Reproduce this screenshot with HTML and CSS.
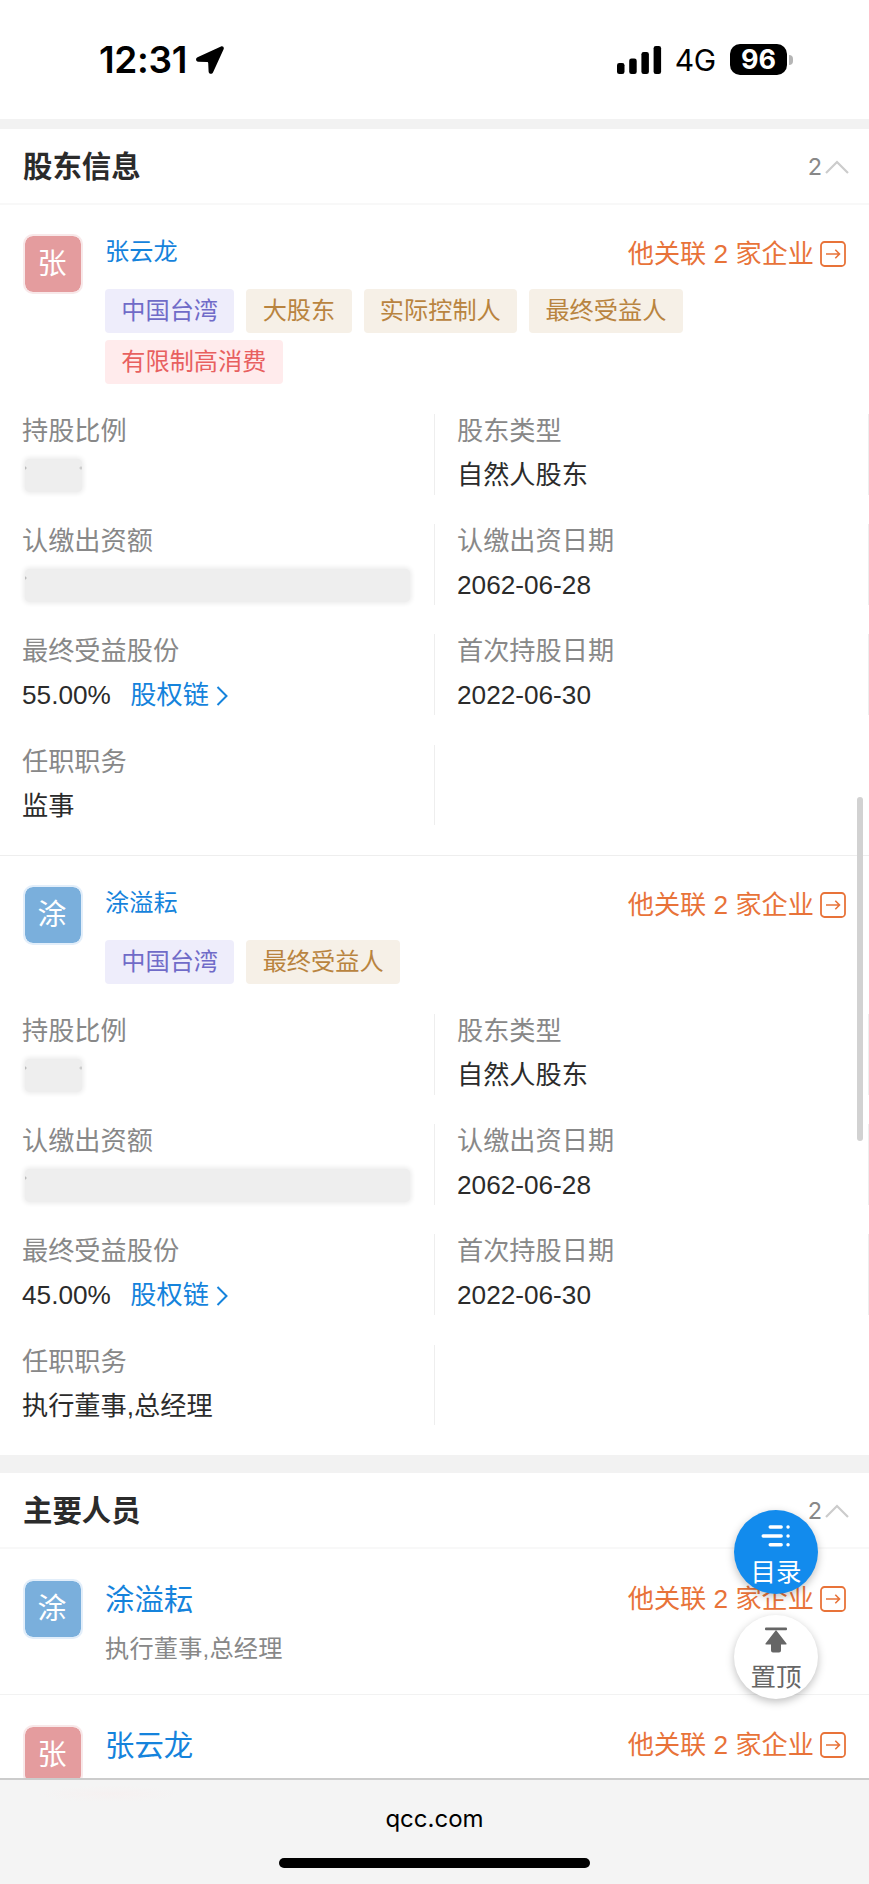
FILE: index.html
```html
<!DOCTYPE html>
<html lang="zh-CN">
<head>
<meta charset="UTF-8" />
<meta name="viewport" content="width=device-width, initial-scale=1" />
<title>股东信息</title>
<link rel="stylesheet" href="styles.css">
</head>
<body>
<svg class="defs" width="0" height="0">
  <symbol id="ic-go" viewBox="0 0 26 26">
    <rect x="1" y="1" width="24" height="24" rx="3.5" fill="none" stroke="currentColor" stroke-width="1.8" />
    <path d="M6 13h13.5M15.300 8.800l4.200 4.200-4.200 4.200" fill="none" stroke="currentColor" stroke-width="1.600" />
  </symbol>
  <symbol id="ic-up" viewBox="0 0 24 14">
    <path d="M1 13L12 2l11 11" fill="none" stroke="currentColor" stroke-width="2.2" />
  </symbol>
  <symbol id="ic-right" viewBox="0 0 12 20">
    <path d="M1.500 1l9 9-9 9" fill="none" stroke="currentColor" stroke-width="2" />
  </symbol>
</svg>

<header class="status">
  <div class="status-left">
    <span class="time">12:31</span>
    <svg class="location" viewBox="0 0 28 28"><path d="M25 .4L1.500 11.300C-.8 12.400-.2 15.600 2.200 15.700l8.800.2c.8 0 1.200.4 1.200 1.200l.4 8.400c.1 2.700 3.500 3.100 4.500.8L27.600 3.200C28.400 1.300 26.900-.4 25 .4z" /></svg>
  </div>
  <div class="status-right">
    <svg class="signal" viewBox="0 0 45 28">
      <rect x="0" y="17" width="7.500" height="11" rx="2.300" />
      <rect x="12.200" y="12.500" width="7.500" height="15.500" rx="2.300" />
      <rect x="24.400" y="6" width="7.500" height="22" rx="2.300" />
      <rect x="36.600" y="0" width="7.500" height="28" rx="2.300" />
    </svg>
    <span class="network">4G</span>
    <span class="battery">96</span>
    <span class="battery-tip"></span>
  </div>
</header>

<main class="content">
  <section class="section">
    <div class="section-head">
      <h2>股东信息</h2>
      <span class="count">2<svg class="ic-up"><use href="#ic-up" /></svg></span>
    </div>

    <article class="holder">
      <div class="person">
        <div class="avatar red">张</div>
        <div class="person-main">
          <div class="person-top">
            <a class="name">张云龙</a>
            <a class="related">他关联 2 家企业<svg class="ic-go"><use href="#ic-go" /></svg></a>
          </div>
          <div class="tags">
            <span class="tag purple">中国台湾</span>
            <span class="tag gold">大股东</span>
            <span class="tag gold">实际控制人</span>
            <span class="tag gold">最终受益人</span>
            <span class="tag pink">有限制高消费</span>
          </div>
        </div>
      </div>
      <div class="info">
        <div class="cell"><label>持股比例</label><div class="mask short"></div></div>
        <div class="cell"><label>股东类型</label><div class="value">自然人股东</div></div>
        <div class="cell"><label>认缴出资额</label><div class="mask"></div></div>
        <div class="cell"><label>认缴出资日期</label><div class="value">2062-06-28</div></div>
        <div class="cell"><label>最终受益股份</label><div class="value">55.00%<a class="chain">股权链<svg class="ic-right"><use href="#ic-right" /></svg></a></div></div>
        <div class="cell"><label>首次持股日期</label><div class="value">2022-06-30</div></div>
        <div class="cell"><label>任职职务</label><div class="value">监事</div></div>
      </div>
    </article>

    <article class="holder">
      <div class="person">
        <div class="avatar blue">涂</div>
        <div class="person-main">
          <div class="person-top">
            <a class="name">涂溢耘</a>
            <a class="related">他关联 2 家企业<svg class="ic-go"><use href="#ic-go" /></svg></a>
          </div>
          <div class="tags">
            <span class="tag purple">中国台湾</span>
            <span class="tag gold">最终受益人</span>
          </div>
        </div>
      </div>
      <div class="info">
        <div class="cell"><label>持股比例</label><div class="mask short"></div></div>
        <div class="cell"><label>股东类型</label><div class="value">自然人股东</div></div>
        <div class="cell"><label>认缴出资额</label><div class="mask"></div></div>
        <div class="cell"><label>认缴出资日期</label><div class="value">2062-06-28</div></div>
        <div class="cell"><label>最终受益股份</label><div class="value">45.00%<a class="chain">股权链<svg class="ic-right"><use href="#ic-right" /></svg></a></div></div>
        <div class="cell"><label>首次持股日期</label><div class="value">2022-06-30</div></div>
        <div class="cell"><label>任职职务</label><div class="value">执行董事,总经理</div></div>
      </div>
    </article>
  </section>

  <section class="section staff">
    <div class="section-head">
      <h2>主要人员</h2>
      <span class="count">2<svg class="ic-up"><use href="#ic-up" /></svg></span>
    </div>
    <article class="member person">
      <div class="avatar blue">涂</div>
      <div class="person-main">
        <div class="person-top">
          <a class="name">涂溢耘</a>
          <a class="related">他关联 2 家企业<svg class="ic-go"><use href="#ic-go" /></svg></a>
        </div>
        <div class="job">执行董事,总经理</div>
      </div>
    </article>
    <article class="member person">
      <div class="avatar red">张</div>
      <div class="person-main">
        <div class="person-top">
          <a class="name">张云龙</a>
          <a class="related">他关联 2 家企业<svg class="ic-go"><use href="#ic-go" /></svg></a>
        </div>
      </div>
    </article>
  </section>
</main>

<div class="float-btns">
  <a class="float-btn primary">
    <svg width="30" height="24" viewBox="0 0 30 24" fill="none" stroke="currentColor" stroke-width="3.400" stroke-linecap="round">
      <path d="M9.200 3h11M2.200 12h18M9.200 20.800h11M27 3h.1M27 12h.1M27 20.800h.1" />
    </svg>
    <span>目录</span>
  </a>
  <a class="float-btn">
    <svg width="24" height="26" viewBox="0 0 24 26" fill="currentColor">
      <rect x="1" y="0.500" width="22" height="2.800" rx="1" />
      <path d="M12 3L22.500 16.500q.6 1-.6 1H17V23.500q0 2-2 2H9q-2 0-2-2V17.500H2.100q-1.200 0-.6-1z" />
    </svg>
    <span>置顶</span>
  </a>
</div>
<div class="scrollbar"></div>

<footer class="toolbar">
  <div class="url">qcc.com</div>
  <div class="home-bar"></div>
</footer>
</body>
</html>
```

FILE: styles.css
```css
* {
  box-sizing: border-box;
}
body {
  margin: 0;
  height: 1884px;
  display: flex;
  flex-direction: column;
  overflow: hidden;
  background: #fff;
  color: #2b2b2b;
  font-family: "Liberation Sans", "Noto Sans CJK SC", sans-serif;
  font-size: 26.2px;
}
.defs {
  position: absolute;
}

/* status bar */
.status {
  flex: none;
  height: 119px;
  padding: 0 76px 0 99px;
  display: flex;
  justify-content: space-between;
  align-items: center;
  color: #000;
  font-family: Inter, sans-serif;
}
.status-left,
.status-right {
  display: flex;
  align-items: center;
}
.time {
  font-size: 37px;
  font-weight: 600;
  line-height: 44px;
  letter-spacing: -0.3px;
}
.location {
  width: 28px;
  height: 28px;
  margin-left: 9px;
}
.signal {
  width: 45px;
  height: 28px;
}
.network {
  margin-left: 13px;
  padding-top: 1px;
  font-size: 30px;
  line-height: 36px;
  letter-spacing: -0.2px;
}
.battery {
  width: 57px;
  height: 31px;
  margin-left: 14px;
  border-radius: 10px;
  background: #000;
  color: #fff;
  font-size: 27px;
  font-weight: 700;
  line-height: 31px;
  text-align: center;
}
.battery-tip {
  width: 4px;
  height: 10px;
  margin-left: 2px;
  border-radius: 0 5px 5px 0;
  background: #b5b5b5;
}

/* sections */
.content {
  flex: 1;
  min-height: 0;
  overflow: hidden;
}
.section {
  border-top: 10px solid #f2f2f2;
}
.staff {
  border-top-width: 18px;
}
.section-head {
  height: 76px;
  padding: 1px 20px 0 23px;
  display: flex;
  justify-content: space-between;
  align-items: center;
  border-bottom: 2px solid #f8f8f8;
}
.section-head h2 {
  margin: 0;
  font-size: 29.4px;
  font-weight: 700;
  line-height: 40px;
}
.count {
  display: flex;
  align-items: center;
  color: #888;
  font-family: Inter, sans-serif;
  font-size: 23.5px;
}
.ic-up {
  width: 24px;
  height: 14px;
  margin-left: 3px;
  color: #ccc;
}

/* person row */
.person {
  display: flex;
}
.avatar {
  flex: none;
  width: 60px;
  height: 60px;
  margin: 0 22px 0 23px;
  padding-right: 2px;
  border: 2px solid #f8e8e9;
  border-radius: 10px;
  background: #e49c9e;
  background-clip: padding-box;
  color: #fff;
  font-size: 29px;
  line-height: 57px;
  text-align: center;
}
.avatar.blue {
  border-color: #e2eefa;
  background-color: #7aafdc;
}
.person-main {
  flex: 1;
}
.person-top {
  height: 40px;
  padding-right: 23px;
  display: flex;
  justify-content: space-between;
  align-items: center;
}
.name {
  padding-bottom: 4px;
  color: #1583dc;
  font-size: 24.2px;
  line-height: 36px;
}
.related {
  display: flex;
  align-items: center;
  color: #e87339;
  line-height: 38px;
  white-space: pre;
}
.ic-go {
  width: 26px;
  height: 26px;
  margin-left: 6px;
}

/* shareholder */
.holder {
  padding: 29px 0 30px;
}
.holder + .holder {
  border-top: 1px solid #eee;
}
.tags {
  display: flex;
  flex-wrap: wrap;
  gap: 7px 12px;
  padding: 15px 100px 0 0;
}
.tag {
  height: 44px;
  padding: 0 16.300px;
  border-radius: 4px;
  font-size: 24.200px;
  line-height: 44px;
}
.purple {
  background: #eeedfb;
  color: #706bc8;
}
.gold {
  background: #f6f0e7;
  color: #b9843f;
}
.pink {
  background: #ffebec;
  color: #e8605f;
}
.info {
  display: grid;
  grid-template-columns: 435px 434px;
  row-gap: 29.700px;
  margin-top: 30px;
}
.cell {
  height: 80.500px;
  padding: 0 22px;
  border-right: 1px solid #eee;
}
.cell label {
  display: block;
  height: 38px;
  color: #888;
  line-height: 34px;
}
.value {
  display: flex;
  line-height: 47px;
}
.chain {
  display: flex;
  align-items: center;
  margin-left: 19.500px;
  color: #1583dc;
}
.ic-right {
  width: 12px;
  height: 20px;
  margin-left: 7px;
}
.mask {
  height: 33px;
  margin: 7px 2px 0 3px;
  border-radius: 5px;
  background: radial-gradient(circle at 0 9px, #bbb 1px, transparent 2px) #eee;
  box-shadow: 0 0 4px 2px #eee;
}
.mask.short {
  width: 57px;
  background: radial-gradient(circle at 0 9px, #bbb 1px, transparent 2px), radial-gradient(circle at 56px 9px, #ccc 1px, transparent 2px), #eee;
}

/* main staff */
.member {
  height: 146px;
  padding-top: 30px;
  border-bottom: 1px solid #f2f2f2;
}
.member .name {
  padding: 2px 0 0;
  font-size: 29.400px;
}
.job {
  margin-top: 12px;
  color: #888;
  font-size: 24.200px;
  line-height: 36px;
  letter-spacing: 0.2px;
}

/* floating buttons */
.float-btns {
  position: absolute;
  top: 1510px;
  right: 51px;
  display: flex;
  flex-direction: column;
  gap: 21px;
}
.float-btn {
  width: 84px;
  height: 84px;
  padding-top: 12px;
  display: flex;
  flex-direction: column;
  align-items: center;
  border-radius: 50%;
  background: #fff;
  color: #666;
  font-size: 25.500px;
  line-height: 49px;
  box-shadow: 0 3px 8px rgba(0, 0, 0, 0.25);
}
.float-btn.primary {
  padding-top: 14px;
  background: #128bed;
  color: #fff;
}
.float-btn svg {
  flex: none;
}
.scrollbar {
  position: absolute;
  top: 797px;
  right: 6px;
  width: 6px;
  height: 344px;
  border-radius: 3px;
  background: #d2d2d2;
}

/* browser toolbar */
.toolbar {
  flex: none;
  height: 106px;
  display: flex;
  flex-direction: column;
  align-items: center;
  border-top: 2px solid #ccc;
  background: radial-gradient(ellipse at 110px 14px, #f6f1f1, #f4f4f4 70px);
  color: #000;
}
.url {
  margin-top: 22px;
  font-family: Inter, sans-serif;
  font-size: 24px;
  line-height: 34px;
}
.home-bar {
  width: 311px;
  height: 10px;
  margin-top: 22px;
  border-radius: 5px;
  background: #000;
}
```
